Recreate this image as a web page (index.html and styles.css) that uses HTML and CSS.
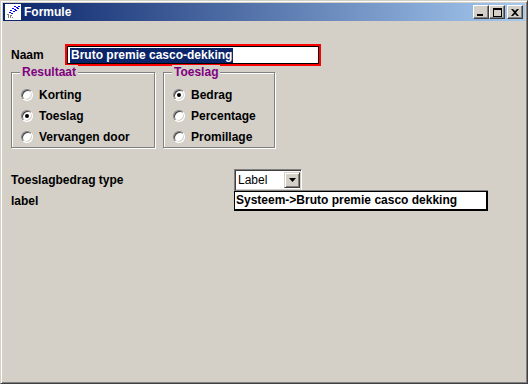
FILE: index.html
```html
<!DOCTYPE html>
<html lang="nl">
<head>
    <meta charset="UTF-8">
    <title>Formule</title>
    <link rel="stylesheet" href="styles.css">
</head>
<body>
    <div class="window">
        <div class="titlebar">
            <svg class="app-icon" width="16" height="16" viewBox="0 0 16 16">
                <rect x="0" y="0" width="16" height="16" fill="#fff"/>
                <path d="M9 2h2v1H9zM11 3h2v1h-2zM13 2h2v1h-2zM7 4h2v1H7zM9 5h2v1H9zM12 4h2v1h-2zM5 6h2v1H5zM8 7h2v1H8zM10 6h2v1h-2zM4 8h2v1H4zM6 9h2v1H6z" fill="#0000ff"/>
                <path d="M2 10h2v1H2zM3 11h1v3H3zM5 11h2v1H5zM5 12h1v2H5zM7 13h1v1H7z" fill="#808080"/>
            </svg>
            <span class="title">Formule</span>
            <div class="controls">
                <button class="ctl">
                    <svg width="8" height="7" viewBox="0 0 8 7"><rect x="0" y="5" width="6" height="2" fill="#000"/></svg>
                </button>
                <button class="ctl">
                    <svg width="9" height="9" viewBox="0 0 9 9"><path d="M0 0h9v9H0zM1 2v6h7V2z" fill="#000" fill-rule="evenodd"/></svg>
                </button>
                <button class="ctl close">
                    <svg width="8" height="7" viewBox="0 0 8 7"><path d="M0 0h2l2 2 2-2h2L5 3.5 8 7H6L4 5 2 7H0l3-3.5z" fill="#000"/></svg>
                </button>
            </div>
        </div>

        <div class="content">
            <div class="name-row">
                <span class="lbl name-lbl">Naam</span>
                <div class="textbox focused"><span class="selected">Bruto premie casco-dekking</span></div>
            </div>

            <div class="groups">
                <div class="group result-group">
                    <span class="group-title">Resultaat</span>
                    <div class="radio-row"><span class="radio"></span>Korting</div>
                    <div class="radio-row"><span class="radio checked"></span>Toeslag</div>
                    <div class="radio-row"><span class="radio"></span>Vervangen door</div>
                </div>
                <div class="group surcharge-group">
                    <span class="group-title">Toeslag</span>
                    <div class="radio-row"><span class="radio checked"></span>Bedrag</div>
                    <div class="radio-row"><span class="radio"></span>Percentage</div>
                    <div class="radio-row"><span class="radio"></span>Promillage</div>
                </div>
            </div>

            <div class="field-row type-row">
                <span class="lbl field-lbl">Toeslagbedrag type</span>
                <div class="combo">
                    <span class="combo-text">Label</span>
                    <span class="combo-btn">
                        <svg width="7" height="4" viewBox="0 0 7 4"><path d="M0 0h7L3.5 4z" fill="#000"/></svg>
                    </span>
                </div>
            </div>
            <div class="field-row label-row">
                <span class="lbl field-lbl">label</span>
                <div class="label-field">Systeem-&gt;Bruto premie casco dekking</div>
            </div>
        </div>
    </div>
</body>
</html>
```

FILE: styles.css
```css
body {
    margin: 0;
    font-family: "Liberation Sans", Arial, sans-serif;
    font-size: 12px;
    font-weight: bold;
    color: #000;
    background-color: #d4d0c8;
}
.window {
    box-sizing: border-box;
    width: 528px;
    height: 384px;
    padding: 1px;
    background-color: #d4d0c8;
    border: 1px solid;
    border-color: #d4d0c8 #404040 #404040 #d4d0c8;
    box-shadow: inset 1px 1px 0 #fff, inset -1px -1px 0 #808080;
}
.titlebar {
    display: flex;
    align-items: center;
    height: 18px;
    margin: 1px 1px 0 1px;
    padding: 0 2px;
    background: linear-gradient(to right, #0a246a, #a6caf0);
}
.app-icon {
    display: block;
    flex-shrink: 0;
}
.title {
    margin-left: 3px;
    color: #fff;
    line-height: 18px;
}
.controls {
    display: flex;
    margin-left: auto;
}
.ctl {
    box-sizing: border-box;
    display: flex;
    align-items: center;
    justify-content: center;
    width: 16px;
    height: 14px;
    padding: 0;
    background-color: #d4d0c8;
    border: 1px solid;
    border-color: #fff #404040 #404040 #fff;
    box-shadow: inset -1px -1px 0 #808080;
}
.ctl svg {
    display: block;
}
.close {
    margin-left: 2px;
}
.content {
    padding: 0 9px;
}
.lbl {
    line-height: 16px;
}
.name-row {
    display: flex;
    align-items: center;
    margin-top: 23px;
}
.name-lbl {
    width: 54px;
}
.textbox {
    box-sizing: border-box;
    width: 256px;
    height: 22px;
    padding: 1px;
    background-color: #fff;
    border: 2px solid #f00;
    box-shadow: inset 0 0 0 1px #000;
}
.selected {
    display: inline-block;
    margin: 1px 0 0 2px;
    padding: 0 1px;
    line-height: 15px;
    color: #fff;
    background-color: #0a246a;
}
.groups {
    display: flex;
    gap: 8px;
    margin-top: 6px;
}
.group {
    position: relative;
    box-sizing: border-box;
    height: 76px;
    padding: 11px 0 1px 9px;
    border: 1px solid #808080;
    box-shadow: 1px 1px 0 #fff, inset 1px 1px 0 #fff;
}
.result-group {
    width: 144px;
}
.surcharge-group {
    width: 112px;
}
.group-title {
    position: absolute;
    top: -8px;
    left: 8px;
    padding: 0 2px;
    line-height: 14px;
    color: #800080;
    background-color: #d4d0c8;
}
.radio-row {
    display: flex;
    align-items: center;
    height: 21px;
}
.radio {
    position: relative;
    box-sizing: border-box;
    width: 12px;
    height: 12px;
    margin-right: 6px;
    flex-shrink: 0;
    border-radius: 50%;
    background-color: #fff;
    border: 1px solid;
    border-color: #808080 #fff #fff #808080;
    box-shadow: inset 1px 1px 0 #404040, inset -1px -1px 0 #d4d0c8;
}
.checked::after {
    content: "";
    position: absolute;
    top: 3px;
    left: 3px;
    width: 4px;
    height: 4px;
    border-radius: 50%;
    background-color: #000;
}
.field-row {
    display: flex;
    align-items: center;
}
.field-lbl {
    width: 223px;
}
.type-row {
    margin-top: 21px;
    height: 22px;
}
.label-row {
    height: 20px;
}
.combo {
    box-sizing: border-box;
    display: flex;
    align-items: center;
    width: 68px;
    height: 22px;
    padding: 1px;
    background-color: #fff;
    border: 1px solid;
    border-color: #808080 #fff #fff #808080;
    box-shadow: inset 1px 1px 0 #404040, inset -1px -1px 0 #d4d0c8;
}
.combo-text {
    margin-left: 2px;
    font-weight: normal;
}
.combo-btn {
    box-sizing: border-box;
    display: flex;
    align-items: center;
    justify-content: center;
    width: 16px;
    height: 16px;
    margin-left: auto;
    background-color: #d4d0c8;
    border: 1px solid;
    border-color: #d4d0c8 #404040 #404040 #d4d0c8;
    box-shadow: inset 1px 1px 0 #fff, inset -1px -1px 0 #808080;
}
.combo-btn svg {
    display: block;
}
.label-field {
    box-sizing: border-box;
    width: 254px;
    height: 20px;
    padding-left: 1px;
    line-height: 16px;
    background-color: #fff;
    border: 1px solid #000;
    border-right-width: 2px;
    border-bottom-width: 2px;
    box-shadow: 0 -1px 0 #808080;
}
```
